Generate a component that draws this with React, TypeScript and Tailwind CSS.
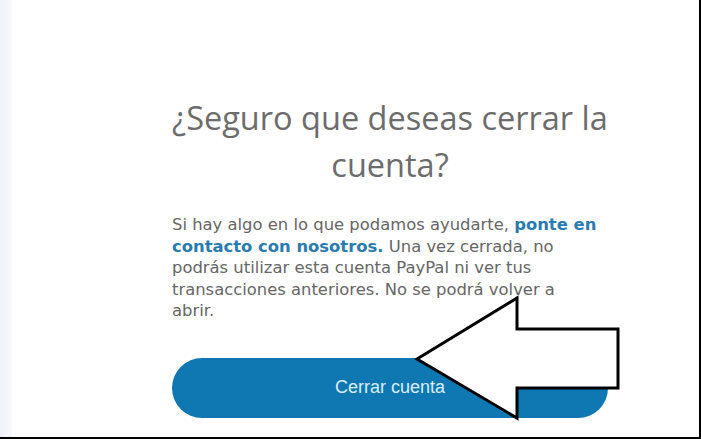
import React from 'react';

export default function App() {
  return (
    <div className="relative w-[701px] h-[439px] bg-white overflow-hidden flex border-r-2 border-b-2 border-black">
      {/* left page edge */}
      <div className="w-[12px] h-full bg-gradient-to-r from-[#eef2f8] to-[#f7f9fc]" />

      <div className="flex-1 pl-[160px]">
        <div className="w-[436px] pt-[94px] flex flex-col">
          <h1
            className="text-center text-[32.5px] leading-[47px] text-[#6c6c6c] font-normal"
            style={{ fontFamily: '"Open Sans", "Noto Sans", sans-serif' }}
          >
            ¿Seguro que deseas cerrar la cuenta?
          </h1>

          <p
            className="mt-[26px] w-[430px] text-[16.4px] leading-[21.5px] text-[#666666]"
            style={{ fontFamily: '"DejaVu Sans", Verdana, sans-serif' }}
          >
            Si hay algo en lo que podamos ayudarte,{' '}
            <a className="font-bold text-[#2a7cb0]">ponte en contacto con nosotros.</a> Una vez cerrada, no
            podrás utilizar esta cuenta PayPal ni ver tus transacciones anteriores. No se podrá volver a
            abrir.
          </p>

          <button
            className="mt-[36px] h-[60px] w-full rounded-full bg-[#0f78b2] text-[#d9eef9] text-[18px]"
            style={{ fontFamily: '"Liberation Sans", Arial, sans-serif' }}
          >
            Cerrar cuenta
          </button>
        </div>
      </div>

      {/* annotation arrow */}
      <svg className="absolute left-0 top-0 pointer-events-none" width="701" height="439" viewBox="0 0 701 439">
        <polygon
          points="417,359 517,298 517,329 618,329 618,388 517,388 517,418"
          fill="white"
          stroke="black"
          strokeWidth="3"
          strokeLinejoin="miter"
        />
      </svg>
    </div>
  );
}
